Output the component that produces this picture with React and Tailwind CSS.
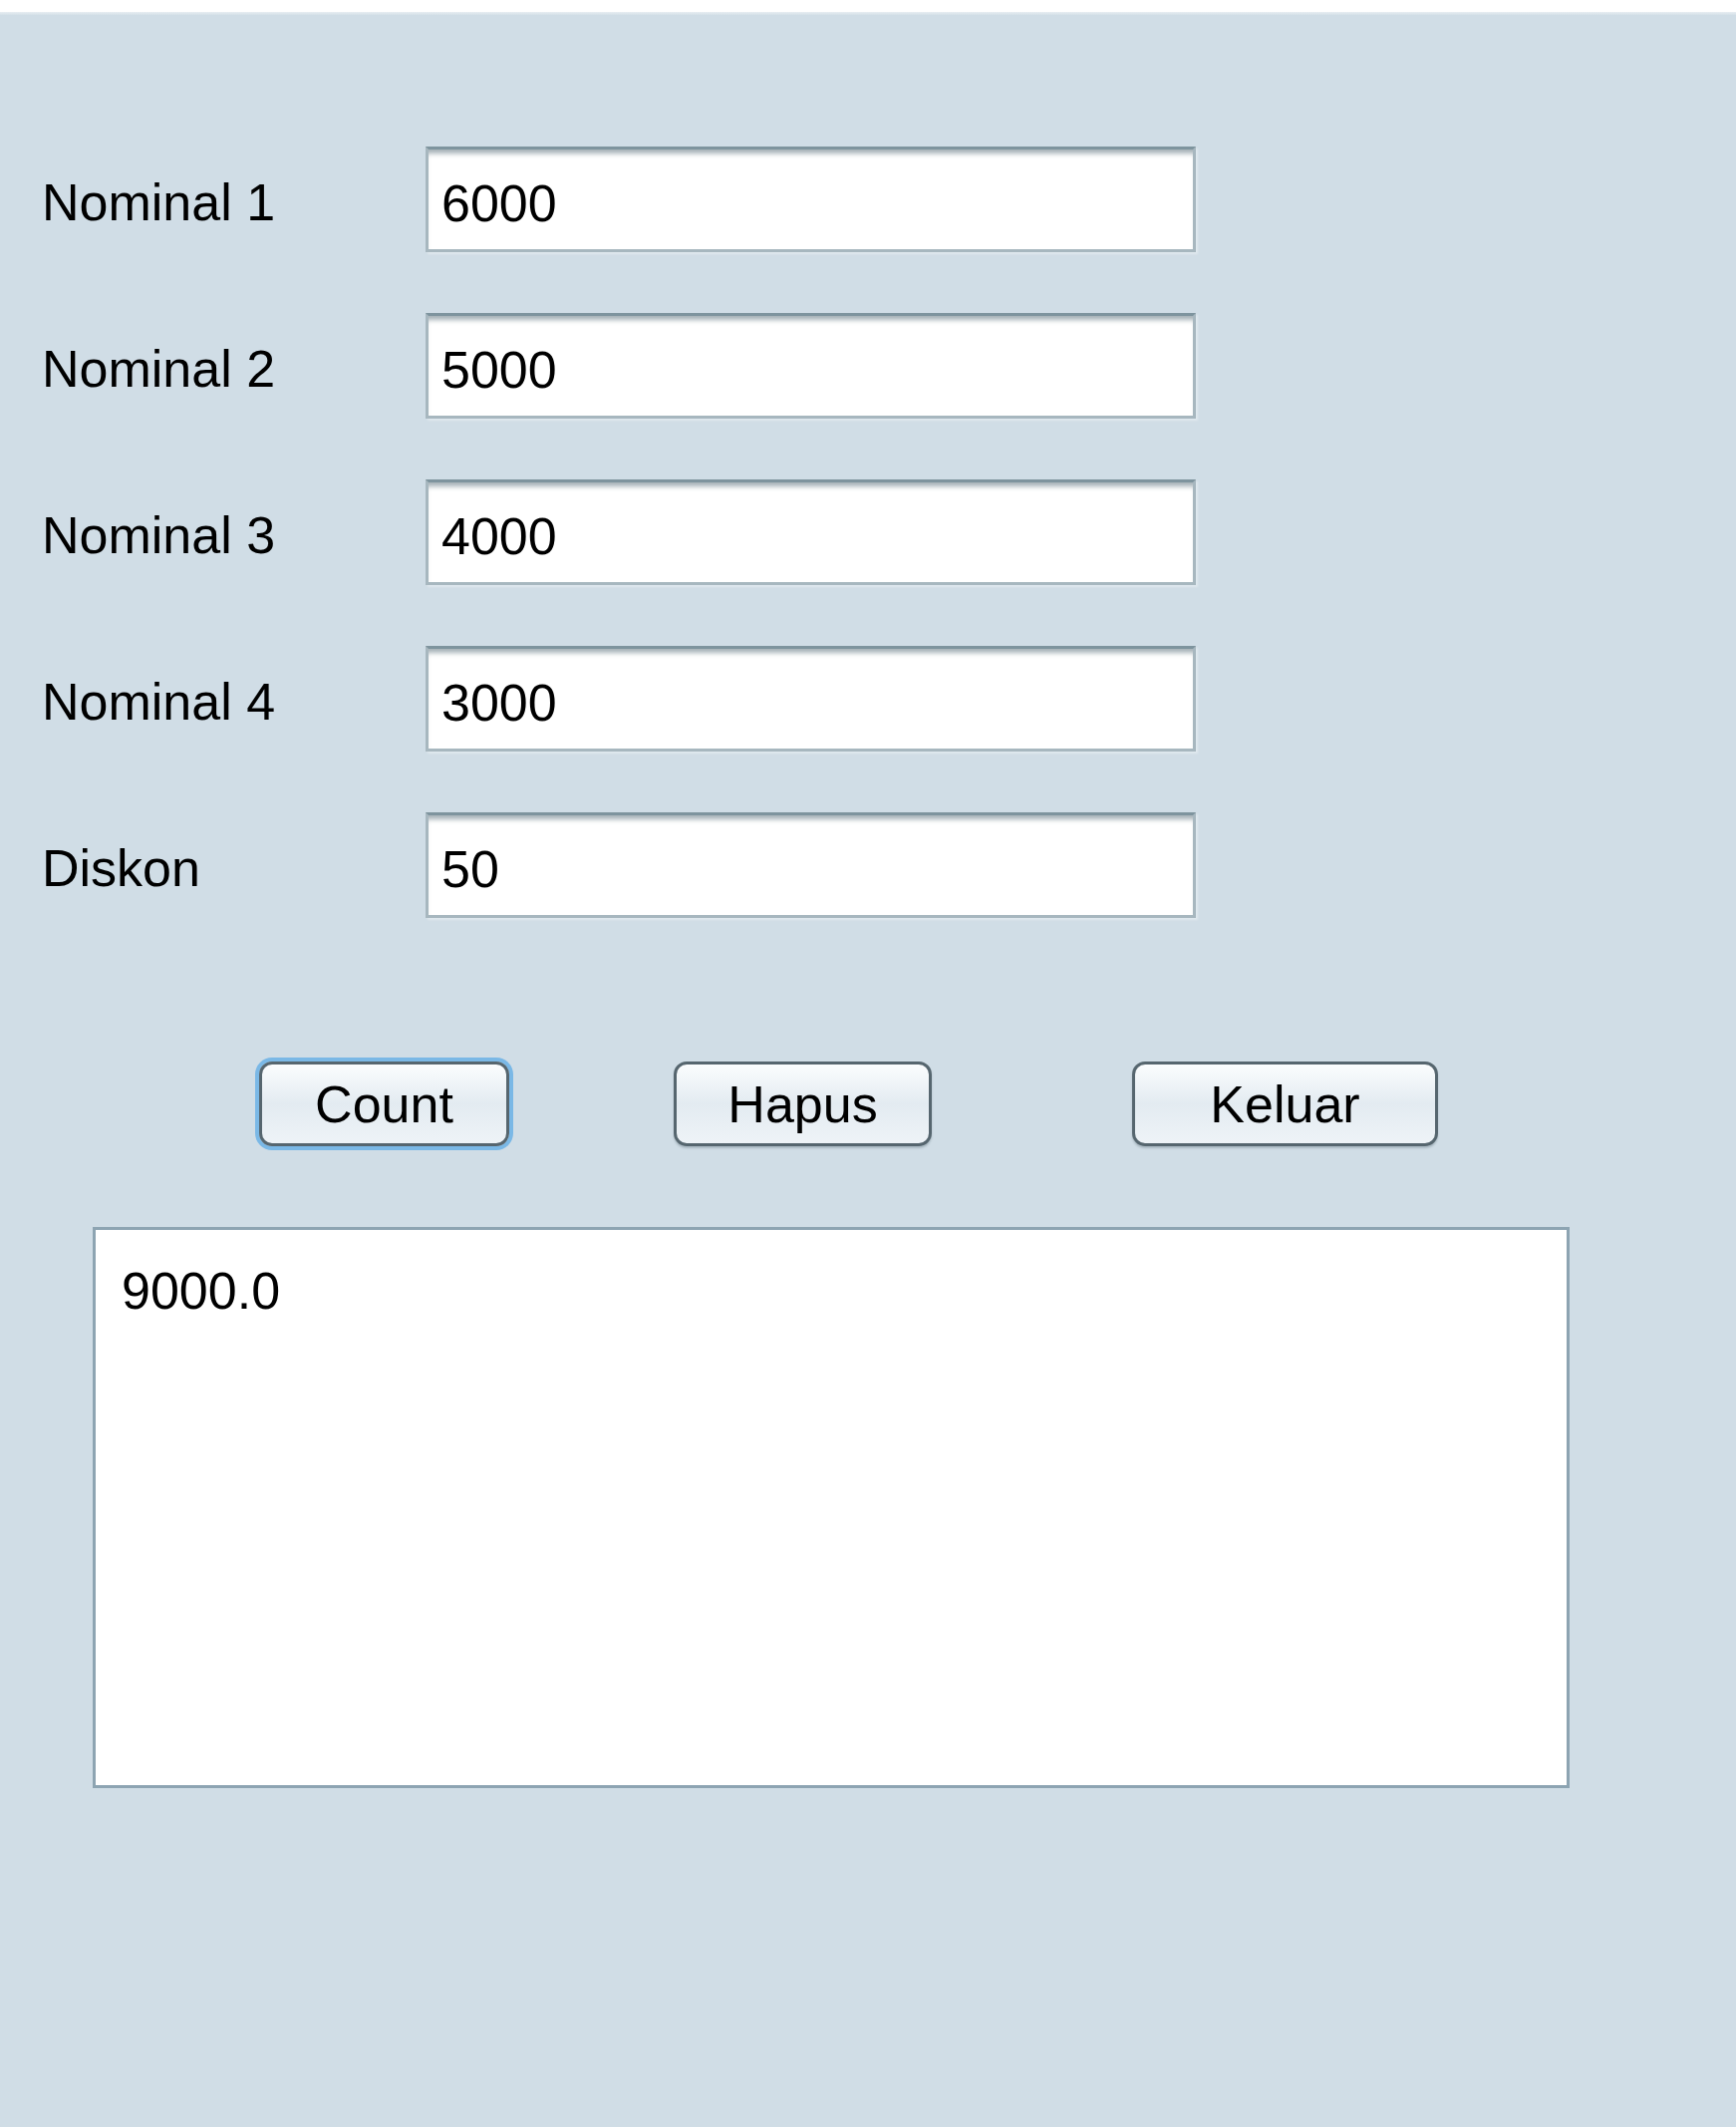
import React, { useState } from 'react';

const fields = [
  { label: 'Nominal 1', value: '6000' },
  { label: 'Nominal 2', value: '5000' },
  { label: 'Nominal 3', value: '4000' },
  { label: 'Nominal 4', value: '3000' },
  { label: 'Diskon', value: '50' },
];

function Field({ label, value }) {
  return (
    <div className="flex items-center h-[106px]">
      <div className="w-[427px] pl-[42px] pt-[6px] text-[52px] leading-none text-black">{label}</div>
      <div className="w-[773px] h-[106px] bg-white border-[3px] border-[#a7b7bf] border-t-[#7e949e] shadow-[inset_0_7px_5px_-3px_rgba(90,112,122,0.55),2px_2px_2px_rgba(255,255,255,0.35)] flex items-center pl-[13px] pt-[8px] text-[52px] leading-none text-black">
        {value}
      </div>
    </div>
  );
}

function Button({ children, focused, className }) {
  return (
    <button
      className={
        'h-[85px] rounded-[13px] border-[3px] border-[#56666f] bg-gradient-to-b from-[#fbfdfe] via-[#e3ebf1] to-[#eef3f7] text-[52px] leading-none text-black ' +
        (focused ? 'shadow-[0_0_0_4px_#7ab8e6] ' : 'shadow-[0_2px_2px_rgba(80,100,110,0.3)] ') +
        className
      }
    >
      {children}
    </button>
  );
}

export default function App() {
  const [result] = useState('9000.0');

  return (
    <div className="min-h-[2134px] w-full bg-[#d0dde6] font-['Liberation_Sans',Arial,sans-serif]">
      <div className="h-[12px] bg-white" />
      <div className="h-[3px] bg-gradient-to-b from-[#e8eef2] to-[#d4e0e8]" />

      <div className="pt-[132px] flex flex-col gap-[61px]">
        {fields.map((f) => (
          <Field key={f.label} label={f.label} value={f.value} />
        ))}
      </div>

      {/* buttons */}
      <div className="flex items-center mt-[144px] pl-[260px]">
        <Button focused className="w-[251px]">Count</Button>
        <Button className="w-[259px] ml-[165px]">Hapus</Button>
        <Button className="w-[307px] ml-[201px]">Keluar</Button>
      </div>

      {/* output */}
      <div className="mt-[81px] ml-[93px] w-[1482px] h-[563px] bg-white border-[3px] border-[#8da4b2] pl-[26px] pt-[35px] text-[52px] leading-none text-black">
        {result}
      </div>
    </div>
  );
}
